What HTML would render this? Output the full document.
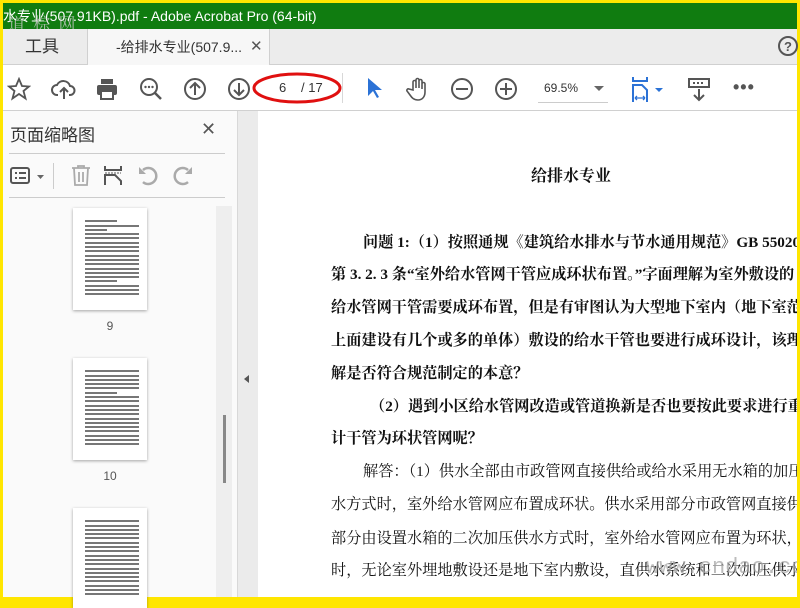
<!DOCTYPE html>
<html><head><meta charset="utf-8"><style>
*{margin:0;padding:0;box-sizing:border-box}
body{width:800px;height:600px;overflow:hidden;background:#ffe600;position:relative;font-family:"Liberation Sans","Noto Sans CJK SC",sans-serif}
.abs{position:absolute}
#title{left:3px;top:3px;width:794px;height:26px;background:#107c10;color:#fff;font-size:14px;line-height:26px;white-space:nowrap;overflow:hidden}
#tabs{left:3px;top:29px;width:794px;height:36px;background:#ececec;border-bottom:1px solid #d0d0d0}
#tab{left:84px;top:0;width:183px;height:36px;background:#f7f7f7;border-left:1px solid #d0d0d0;border-right:1px solid #d0d0d0;font-size:14px;line-height:36px;color:#333;padding-left:28px}
#tool{left:3px;top:65px;width:794px;height:46px;background:#fff;border-bottom:1px solid #d0d0d0}
#panel{left:3px;top:111px;width:235px;height:486px;background:#fafafa;border-right:1px solid #d8d8d8}
#strip{left:238px;top:111px;width:20px;height:486px;background:#ebebeb}
#page{left:258px;top:111px;width:539px;height:486px;background:#fff;overflow:hidden;font-family:"Liberation Serif","Noto Serif CJK SC",serif;color:#111}
.ln{position:absolute;white-space:nowrap;font-size:15.2px;left:73px}
.b{font-weight:bold}
.thumb{position:absolute;left:70px;width:74px;background:#fff;box-shadow:0 1px 3px rgba(0,0,0,.35)}
.tl{height:2px;background:#777;margin:2.3px 8px 0 12px}
.num{position:absolute;width:74px;left:70px;text-align:center;font-size:12px;color:#555}
svg{position:absolute}
</style></head><body>
<div id="title" class="abs">水专业(507.91KB).pdf - Adobe Acrobat Pro (64-bit)</div>
<div class="abs" style="left:8px;top:10px;color:rgba(200,200,200,.8);font-size:17px;letter-spacing:2px;font-family:'Liberation Serif','Noto Serif CJK SC',serif">道 棕 网</div>
<div id="tabs" class="abs">
 <div class="abs" style="left:22px;top:0;font-size:17px;line-height:36px;color:#333">工具</div>
 <div id="tab" class="abs">-给排水专业(507.9...<span style="position:absolute;left:162px;font-size:15px;color:#555">✕</span></div>
 <svg style="left:774px;top:6px" width="22" height="22"><circle cx="11" cy="11" r="9" fill="none" stroke="#555" stroke-width="2"/><text x="11" y="16" text-anchor="middle" font-size="13" font-weight="bold" fill="#555" font-family="Liberation Sans">?</text></svg>
</div>
<div id="tool" class="abs">
 <svg style="left:4px;top:12px" width="24" height="24"><path d="M12 2l3 7 7 .5-5.5 4.5 2 7.5L12 17l-6.5 4.5 2-7.5L2 9.5 9 9z" fill="none" stroke="#555" stroke-width="1.8"/></svg>
 <svg style="left:48px;top:12px" width="26" height="24"><path d="M7 18H6a5 5 0 010-10 7 7 0 0113 1 4.5 4.5 0 010 9h-1M13 22V11M9 15l4-4 4 4" fill="none" stroke="#555" stroke-width="2"/></svg>
 <svg style="left:92px;top:12px" width="24" height="24"><rect x="6" y="2" width="12" height="5" fill="#555"/><rect x="2" y="8" width="20" height="10" rx="2" fill="#555"/><rect x="6" y="14" width="12" height="8" fill="#fff" stroke="#555" stroke-width="2"/></svg>
 <svg style="left:136px;top:12px" width="24" height="24"><circle cx="10" cy="10" r="8" fill="none" stroke="#555" stroke-width="2"/><path d="M16 16l6 6" stroke="#555" stroke-width="2.5"/><circle cx="6.5" cy="10" r="1.2" fill="#555"/><circle cx="10" cy="10" r="1.2" fill="#555"/><circle cx="13.5" cy="10" r="1.2" fill="#555"/></svg>
 <svg style="left:180px;top:12px" width="24" height="24"><circle cx="12" cy="12" r="10" fill="none" stroke="#555" stroke-width="2"/><path d="M12 18V6M7 11l5-5 5 5" fill="none" stroke="#555" stroke-width="2"/></svg>
 <svg style="left:224px;top:12px" width="24" height="24"><circle cx="12" cy="12" r="10" fill="none" stroke="#555" stroke-width="2"/><path d="M12 6v12M7 13l5 5 5-5" fill="none" stroke="#555" stroke-width="2"/></svg>
 <div class="abs" style="left:276px;top:15px;font-size:13px;color:#333">6</div>
 <div class="abs" style="left:298px;top:15px;font-size:13px;color:#333">/ 17</div>
 <svg style="left:248px;top:4px" width="92" height="36"><ellipse cx="46" cy="19" rx="43" ry="14" fill="none" stroke="#e01010" stroke-width="3"/></svg>
 <div class="abs" style="left:339px;top:8px;width:1px;height:30px;background:#d8d8d8"></div>
 <svg style="left:362px;top:11px" width="18" height="24"><path d="M3 2v18l5-5 4 7 2-1-4-7h7z" fill="#2b72d6"/></svg>
 <svg style="left:403px;top:11px" width="26" height="26"><path d="M7 14V6a1.5 1.5 0 013 0v6V4a1.5 1.5 0 013 0v8V5a1.5 1.5 0 013 0v8V8a1.5 1.5 0 013 0v8c0 5-3 8-7 8s-6-2-8-5l-3-4a1.5 1.5 0 012-2z" fill="none" stroke="#555" stroke-width="1.6"/></svg>
 <svg style="left:447px;top:12px" width="24" height="24"><circle cx="12" cy="12" r="10" fill="none" stroke="#555" stroke-width="2"/><path d="M6 12h12" stroke="#555" stroke-width="2"/></svg>
 <svg style="left:491px;top:12px" width="24" height="24"><circle cx="12" cy="12" r="10" fill="none" stroke="#555" stroke-width="2"/><path d="M6 12h12M12 6v12" stroke="#555" stroke-width="2"/></svg>
 <div class="abs" style="left:541px;top:16px;font-size:12px;color:#333">69.5%</div>
 <div class="abs" style="left:591px;top:21px;border:5px solid transparent;border-top:5px solid #666"></div>
 <div class="abs" style="left:535px;top:37px;width:70px;height:1px;background:#ccc"></div>
 <svg style="left:628px;top:10px" width="36" height="28"><path d="M2 2v4h14V2" fill="none" stroke="#2b72d6" stroke-width="2"/><path d="M2 27V10h9l5 5v12" fill="none" stroke="#2b72d6" stroke-width="2"/><path d="M4 23h10M4 23l2-2M4 23l2 2M14 23l-2-2M14 23l-2 2" stroke="#2b72d6" stroke-width="1.3"/><path d="M24 13h8l-4 4z" fill="#2b72d6"/></svg>
 <svg style="left:684px;top:12px" width="24" height="26"><rect x="2" y="2" width="20" height="8" fill="none" stroke="#555" stroke-width="2"/><path d="M6 6h2M10 6h2M14 6h2M12 12v11M7 18l5 5 5-5" fill="none" stroke="#555" stroke-width="2"/></svg>
 <div class="abs" style="left:730px;top:12px;font-size:18px;color:#555;font-weight:bold;letter-spacing:1px">•••</div>
</div>
<div id="panel" class="abs">
 <div class="abs" style="left:7px;top:10px;font-size:17px;color:#333">页面缩略图</div>
 <div class="abs" style="left:198px;top:8px;font-size:18px;color:#555">✕</div>
 <div class="abs" style="left:6px;top:42px;width:216px;height:1px;background:#ccc"></div>
 <svg style="left:6px;top:54px" width="40" height="22"><rect x="2" y="3" width="18" height="15" rx="2" fill="none" stroke="#555" stroke-width="2"/><path d="M6 8h2M10 8h7M6 13h2M10 13h7" stroke="#555" stroke-width="2"/><path d="M28 10h7l-3.5 4z" fill="#666"/></svg>
 <div class="abs" style="left:50px;top:52px;width:1px;height:26px;background:#ccc"></div>
 <svg style="left:66px;top:52px" width="24" height="24"><path d="M3 5h18M9 5V3h6v2M5 5l1 17h12l1-17M10 9v10M14 9v10" fill="none" stroke="#aaa" stroke-width="1.8"/></svg>
 <svg style="left:100px;top:52px" width="24" height="24"><path d="M2 3v4h16V3M2 22V12h10l6 6v4" fill="none" stroke="#555" stroke-width="2"/><path d="M2 10h16" stroke="#555" stroke-dasharray="2 1"/></svg>
 <svg style="left:134px;top:52px" width="24" height="24"><path d="M6 19A8 8 0 106 7" fill="none" stroke="#aaa" stroke-width="2.5"/><path d="M2 4v7h7z" fill="#aaa"/></svg>
 <svg style="left:167px;top:52px" width="24" height="24"><g transform="translate(24,0) scale(-1,1)"><path d="M6 19A8 8 0 106 7" fill="none" stroke="#aaa" stroke-width="2.5"/><path d="M2 4v7h7z" fill="#aaa"/></g></svg>
 <div class="abs" style="left:6px;top:86px;width:216px;height:1px;background:#ccc"></div>
 <div class="abs" style="left:213px;top:95px;width:16px;height:391px;background:#eeeeee"></div>
 <div class="abs" style="left:220px;top:304px;width:3px;height:68px;background:#888"></div>
 <div class="thumb" style="top:97px;height:102px;padding-top:10px"><div class="tl" style="margin-right:30px"></div><div class="tl"></div><div class="tl" style="margin-right:40px"></div><div class="tl"></div><div class="tl"></div><div class="tl"></div><div class="tl"></div><div class="tl"></div><div class="tl"></div><div class="tl"></div><div class="tl"></div><div class="tl"></div><div class="tl"></div><div class="tl"></div><div class="tl" style="margin-right:30px"></div><div class="tl"></div><div class="tl"></div><div class="tl"></div></div>
 <div class="num" style="top:208px">9</div>
 <div class="thumb" style="top:247px;height:102px;padding-top:10px"><div class="tl"></div><div class="tl"></div><div class="tl"></div><div class="tl"></div><div class="tl"></div><div class="tl" style="margin-right:30px"></div><div class="tl"></div><div class="tl"></div><div class="tl"></div><div class="tl"></div><div class="tl"></div><div class="tl"></div><div class="tl"></div><div class="tl"></div><div class="tl"></div><div class="tl"></div><div class="tl"></div><div class="tl"></div></div>
 <div class="num" style="top:358px">10</div>
 <div class="thumb" style="top:397px;height:100px;padding-top:10px"><div class="tl"></div><div class="tl"></div><div class="tl"></div><div class="tl"></div><div class="tl"></div><div class="tl"></div><div class="tl"></div><div class="tl"></div><div class="tl"></div><div class="tl"></div><div class="tl"></div><div class="tl"></div><div class="tl"></div><div class="tl"></div><div class="tl"></div><div class="tl"></div><div class="tl"></div><div class="tl"></div></div>
</div>
<div id="strip" class="abs"><div class="abs" style="left:6px;top:264px;border:4px solid transparent;border-right:5px solid #555;border-left:0"></div></div>
<div id="page" class="abs">
 <div class="ln b" style="left:273px;top:52px;font-size:16px">给排水专业</div>
 <div class="ln b" style="left:105px;top:120px">问题 1:（1）按照通规《建筑给水排水与节水通用规范》GB 55020-2021</div>
 <div class="ln b" style="top:152px">第 3. 2. 3 条“室外给水管网干管应成环状布置。”字面理解为室外敷设的</div>
 <div class="ln b" style="top:185px">给水管网干管需要成环布置，但是有审图认为大型地下室内（地下室范围</div>
 <div class="ln b" style="top:218px">上面建设有几个或多的单体）敷设的给水干管也要进行成环设计，该理</div>
 <div class="ln b" style="top:251px">解是否符合规范制定的本意？</div>
 <div class="ln b" style="left:112px;top:284px">（2）遇到小区给水管网改造或管道换新是否也要按此要求进行重新设</div>
 <div class="ln b" style="top:316px">计干管为环状管网呢？</div>
 <div class="ln" style="left:105px;top:349px">解答：（1）供水全部由市政管网直接供给或给水采用无水箱的加压供</div>
 <div class="ln" style="top:382px">水方式时，室外给水管网应布置成环状。供水采用部分市政管网直接供给、</div>
 <div class="ln" style="top:416px">部分由设置水箱的二次加压供水方式时，室外给水管网应布置为环状，同</div>
 <div class="ln" style="top:448px">时，无论室外埋地敷设还是地下室内敷设，直供水系统和二次加压供水系</div>
 <div class="abs" style="left:388px;top:444px;font-size:22px;color:rgba(160,160,160,.7);font-family:'Liberation Mono',monospace">www.cndao.com</div>
</div>
</body></html>
